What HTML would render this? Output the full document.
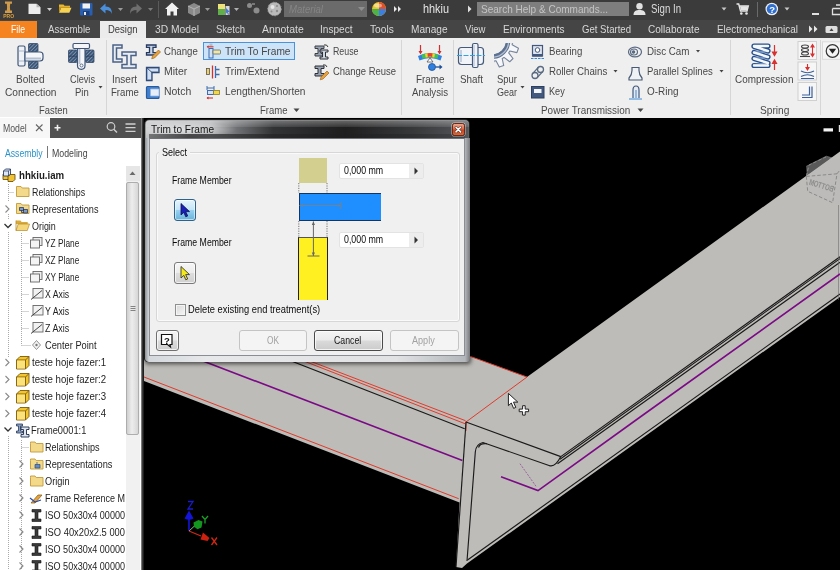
<!DOCTYPE html>
<html>
<head>
<meta charset="utf-8">
<title>Inventor</title>
<style>
*{box-sizing:border-box;margin:0;padding:0}
html,body{width:840px;height:570px;overflow:hidden;background:#000}
body{filter:blur(0.4px);font-family:"Liberation Sans",sans-serif;font-size:12px;color:#3a3a3a;position:relative}
.abs{position:absolute}
.t{position:absolute;white-space:nowrap;line-height:1}
#titlebar{left:0;top:0;width:840px;height:20px;background:#3b3b3b}
#tabbar{left:0;top:20px;width:840px;height:18px;background:#474747}
#ribbon{left:0;top:38px;width:840px;height:79px;background:#eeeeee}
.tab{position:absolute;top:24px;font-size:11.5px;color:#d6d6d6;white-space:nowrap;line-height:1}
.rt{position:absolute;font-size:11.5px;color:#3c3c3c;white-space:nowrap;line-height:1}
.pl{position:absolute;font-size:11px;color:#444;white-space:nowrap;line-height:1;top:105px}
.sep{position:absolute;top:40px;width:1px;height:74px;background:#d4d4d4}
#browser{left:0;top:117px;width:141px;height:453px;background:#fff}
.tr{position:absolute;font-size:10.5px;color:#222;white-space:nowrap;line-height:1}
#viewport{left:141px;top:117px;width:699px;height:453px;background:#000}
#dialog{left:146px;top:120px;width:323px;height:242px}
.dt{position:absolute;font-size:10.5px;color:#1a1a1a;white-space:nowrap;line-height:1}
</style>
</head>
<body>
<!-- VIEWPORT -->
<div id="viewport" class="abs"></div>
<svg class="abs" style="left:0;top:0" width="840" height="570" viewBox="0 0 840 570" id="scene">
<!-- grey beams -->
<polygon points="144,238 527,377 840,151.500 840,297 467,563.5 462,568 456,567 459.5,502.5 144,381" fill="#bebcb8"/>
<!-- red lines -->
<g stroke="#e03a2a" stroke-width="1" fill="none">
<line x1="144" y1="377" x2="458.7" y2="498.7"/>
<line x1="144" y1="238" x2="527" y2="377"/>
<line x1="527" y1="377" x2="466" y2="422"/>
<line x1="200" y1="318.9" x2="465.5" y2="420.7"/>
<line x1="200" y1="320.7" x2="465.5" y2="423.9"/>
<line x1="466" y1="421" x2="466" y2="431"/>
</g>
<!-- black edge lines -->
<g stroke="#1a1a1a" stroke-width="1.15" fill="none">
<line x1="200" y1="325.3" x2="464.7" y2="428.8"/>
<line x1="466" y1="422" x2="456" y2="567"/>
<path d="M467,561 L475.3,452 Q476,444 483,442.5 L549,465.5 Q555,468 560.8,456.6"/>
<path d="M478.5,447.5 Q480,443 487,443.8"/>
<line x1="466" y1="422" x2="560.8" y2="456.6"/>
<line x1="560.8" y1="456.6" x2="840" y2="256.8"/>
<line x1="560" y1="459.2" x2="840" y2="258.6"/>
<line x1="557.5" y1="463.8" x2="840" y2="262.2"/>
<line x1="467.5" y1="560" x2="840" y2="294"/>
</g>
<line x1="838.5" y1="205" x2="838.5" y2="300" stroke="#6a6a6a" stroke-width="1" opacity=".55"/>
<!-- purple lines -->
<g stroke="#7b0a86" stroke-width="1.6" fill="none">
<line x1="160" y1="344.4" x2="462.4" y2="460.5"/>
<polyline points="501,476.8 538,490.6 643,415 840,274"/>
</g>
<line x1="520" y1="463.7" x2="536.5" y2="487" stroke="#8a3a90" stroke-width="0.7" stroke-dasharray="2,1.2"/>
</svg>
<!-- TITLE BAR -->
<div class="abs" style="left:0px;top:0px;width:840px;height:20px;background:#3b3b3b;"></div>
<div class="abs" style="left:0px;top:20px;width:840px;height:18px;background:#454545;"></div>
<div class="abs" style="left:0px;top:21px;width:37px;height:17px;background:#f5831f;"></div>
<div class="abs" style="left:100px;top:21px;width:46px;height:17px;background:#ececec;"></div>
<div class="t" style="left:11.00px;top:24.00px;font-size:11px;color:#ffffff;transform:scaleX(0.7898);transform-origin:0 0;">File</div>
<div class="t" style="left:47.50px;top:24.00px;font-size:11px;color:#d8d8d8;transform:scaleX(0.8799);transform-origin:0 0;">Assemble</div>
<div class="t" style="left:108.00px;top:24.00px;font-size:11px;color:#3a3a3a;transform:scaleX(0.8615);transform-origin:0 0;">Design</div>
<div class="t" style="left:155.00px;top:24.00px;font-size:11px;color:#d8d8d8;transform:scaleX(0.9346);transform-origin:0 0;">3D Model</div>
<div class="t" style="left:215.50px;top:24.00px;font-size:11px;color:#d8d8d8;transform:scaleX(0.8623);transform-origin:0 0;">Sketch</div>
<div class="t" style="left:262.00px;top:24.00px;font-size:11px;color:#d8d8d8;transform:scaleX(0.9480);transform-origin:0 0;">Annotate</div>
<div class="t" style="left:320.00px;top:24.00px;font-size:11px;color:#d8d8d8;transform:scaleX(0.9164);transform-origin:0 0;">Inspect</div>
<div class="t" style="left:370.00px;top:24.00px;font-size:11px;color:#d8d8d8;transform:scaleX(0.9248);transform-origin:0 0;">Tools</div>
<div class="t" style="left:411.00px;top:24.00px;font-size:11px;color:#d8d8d8;transform:scaleX(0.9182);transform-origin:0 0;">Manage</div>
<div class="t" style="left:465.00px;top:24.00px;font-size:11px;color:#d8d8d8;transform:scaleX(0.8670);transform-origin:0 0;">View</div>
<div class="t" style="left:503.00px;top:24.00px;font-size:11px;color:#d8d8d8;transform:scaleX(0.9144);transform-origin:0 0;">Environments</div>
<div class="t" style="left:582.00px;top:24.00px;font-size:11px;color:#d8d8d8;transform:scaleX(0.8711);transform-origin:0 0;">Get Started</div>
<div class="t" style="left:648.00px;top:24.00px;font-size:11px;color:#d8d8d8;transform:scaleX(0.9154);transform-origin:0 0;">Collaborate</div>
<div class="t" style="left:717.00px;top:24.00px;font-size:11px;color:#d8d8d8;transform:scaleX(0.9012);transform-origin:0 0;">Electromechanical</div>
<div class="t" style="left:423.00px;top:3.00px;font-size:12px;color:#e4e4e4;transform:scaleX(0.9063);transform-origin:0 0;">hhkiu</div>
<div class="abs" style="left:284px;top:1px;width:83px;height:16px;background:#6b6b6b;"></div>
<div class="t" style="left:289.00px;top:4.00px;font-size:11.5px;color:#858585;font-style:italic;transform:scaleX(0.8312);transform-origin:0 0;">Material</div>
<div class="abs" style="left:476.5px;top:1.5px;width:152.5px;height:14.5px;background:#7e7e7e;"></div>
<div class="t" style="left:481.00px;top:4.00px;font-size:11.5px;color:#c4c4c4;transform:scaleX(0.8715);transform-origin:0 0;">Search Help &amp; Commands...</div>
<div class="t" style="left:651.00px;top:3.00px;font-size:12px;color:#dcdcdc;transform:scaleX(0.8030);transform-origin:0 0;">Sign In</div>
<svg class="abs" style="left:0;top:0" width="840" height="38" viewBox="0 0 840 38">
<!-- logo -->
<path d="M5,1.500 h7 v2.300 h-1.800 q-.6,3.300 0,6.800 h1.800 v2.400 h-7 v-2.400 h1.800 q.6,-3.500 0,-6.800 h-1.800 z" fill="#d09a4c"/>
<text x="3.200" y="18.300" font-family="Liberation Sans" font-size="5" font-weight="bold" fill="#d9a040">PRO</text>
<!-- new -->
<path d="M28.500,3.800 h8 l4,3.500 v6.700 h-12 z" fill="#ececec"/><path d="M36.500,3.800 l4,3.500 h-4 z" fill="#b5b5b5"/>
<path d="M47,8 h5 l-2.5,3 z" fill="#cfcfcf"/>
<!-- open -->
<path d="M59,4.500 h4.500 l1,1.300 h5.500 v2 h-11 z" fill="#e8b830"/><path d="M59,12.800 l2.200,-5 h10.300 l-2.200,5 z" fill="#f7d354"/><path d="M59,5.500 v7.300 l2.200,-5 h8.800 v-1 h-11z" fill="#c9961a"/>
<!-- save -->
<rect x="80" y="3" width="12.5" height="12.5" rx="1" fill="#2a5fb0"/><rect x="82.5" y="3.5" width="7.5" height="5" fill="#f2f2f2"/><rect x="83" y="11" width="6.5" height="4.5" fill="#1b3f7a"/><rect x="84" y="12" width="2" height="3" fill="#e8e8e8"/>
<!-- undo -->
<path d="M100,8.5 l5.5,-5 v3 c5,0 6.5,3 6.5,7.5 c-1,-3 -3,-4 -6.5,-4 v3.5 z" fill="#4a8fdc"/>
<path d="M118,8 h5 l-2.5,3 z" fill="#9a9a9a"/>
<!-- redo -->
<path d="M142,8.5 l-5.5,-5 v3 c-5,0 -6.5,3 -6.5,7.5 c1,-3 3,-4 6.5,-4 v3.5 z" fill="#6e6e6e"/>
<path d="M148,8 h5 l-2.5,3 z" fill="#7d7d7d"/>
<rect x="158" y="1" width="1" height="17" fill="#5a5a5a"/>
<!-- home -->
<path d="M172,2.5 l7,6.5 h-2 v6.5 h-3.5 v-4 h-3 v4 h-3.5 v-6.5 h-2 z" fill="#f0f0f0"/>
<!-- grey cube icon -->
<path d="M188,6 l6,-3 l6,3 v7 l-6,3 l-6,-3 z" fill="#8a8a8a"/><path d="M188,6 l6,3 l6,-3 M194,9 v7" stroke="#b5b5b5" stroke-width="1" fill="none"/>
<path d="M205,8 h5 l-2.5,3 z" fill="#9a9a9a"/>
<!-- green/yellow icon -->
<rect x="218" y="4" width="7" height="5" fill="#f0e27a"/><rect x="218" y="9" width="7" height="6" fill="#5fb04a"/><rect x="225.5" y="6" width="4" height="9" fill="#d8d8d8"/><path d="M226,8 l4,4 l-2,0 l1,2.5 l-1,.5 l-1,-2.5 l-1,1 z" fill="#4a7ad0"/>
<path d="M234,8 h5 l-2.5,3 z" fill="#b0b0b0"/>
<!-- grey dots -->
<circle cx="249.500" cy="5.500" r="2.500" fill="#8c8c8c"/><circle cx="256.500" cy="10.500" r="3" fill="#8c8c8c"/><rect x="252" y="3" width="3" height="2" fill="#777"/>
<!-- sphere -->
<circle cx="274.500" cy="9" r="6.800" fill="#b9b9b9"/><circle cx="274.500" cy="9" r="6.800" fill="none" stroke="#9a9a9a" stroke-width="1" stroke-dasharray="1.5,1.5"/><circle cx="272.500" cy="7" r="2" fill="#e6e6e6"/><circle cx="277" cy="11" r="1.200" fill="#8a8a8a"/><circle cx="271.500" cy="11.500" r="1" fill="#8a8a8a"/><circle cx="277" cy="6" r="1" fill="#8a8a8a"/>
<path d="M358,7 h7 l-3.500,4 z" fill="#8f8f8f"/>
<!-- colour wheel -->
<circle cx="379" cy="9" r="7" fill="#e8c62a"/><path d="M379,9 L379,2 A7,7 0 0 1 386,9 z" fill="#e2502a"/><path d="M379,9 L386,9 A7,7 0 0 1 379,16 z" fill="#3c7fe0"/><path d="M379,9 L379,16 A7,7 0 0 1 372,9 z" fill="#4db04a"/><ellipse cx="378" cy="5.500" rx="4" ry="2" fill="#fff" opacity=".45"/>
<path d="M394,6 l3,3 l-3,3 z M398,6 l3,3 l-3,3 z" fill="#e8e8e8"/>
<path d="M468,5.500 l3.500,3.500 l-3.500,3.500 z" fill="#e0e0e0"/>
<!-- user -->
<circle cx="639.500" cy="6.300" r="3.200" fill="#e2e2e2"/><path d="M633.500,15 c0,-4 2.500,-5 6,-5 s6,1 6,5 z" fill="#e2e2e2"/>
<path d="M721.500,7.500 h5 l-2.500,3 z" fill="#c8c8c8"/>
<!-- cart -->
<path d="M736.500,4 h2.200 l1.800,7 h6.500 l1.300,-5 h-9" stroke="#e6e6e6" stroke-width="1.400" fill="none"/><circle cx="741.300" cy="13.500" r="1.300" fill="#e6e6e6"/><circle cx="746.500" cy="13.500" r="1.300" fill="#e6e6e6"/><path d="M740,6.200 h8 l-.9,4 h-6.200 z" fill="#e6e6e6"/>
<rect x="757" y="2" width="1" height="15" fill="#6a6a6a"/>
<!-- help -->
<circle cx="771.800" cy="9" r="6.300" fill="#f0f0f0"/><circle cx="771.800" cy="9" r="5.100" fill="#2f6fd0"/>
<text x="769.300" y="12.500" font-family="Liberation Sans" font-size="9.500" font-weight="bold" fill="#fff">?</text>
<path d="M784.500,7.500 h5 l-2.500,3 z" fill="#c8c8c8"/>
<rect x="812" y="13" width="7" height="2" fill="#e0e0e0"/>
<path d="M832.500,8.500 h8 M832.500,8.500 v6 h8 M836,5 h5" stroke="#e0e0e0" stroke-width="1.300" fill="none"/>
<!-- tab row right -->
<path d="M809,25.500 l3.500,3.500 l-3.500,3.500 z M814,25.500 l3.500,3.500 l-3.500,3.500 z" fill="#e8e8e8"/>
<rect x="825.500" y="26" width="12" height="7" rx="1.500" fill="#e0e0e0"/><path d="M829.500,31 l2,-2.800 l2,2.800 z" fill="#444"/>
</svg>
<div class="abs" style="left:0px;top:38px;width:840px;height:79.6px;background:#efefef;"></div>
<div class="abs" style="left:105.5px;top:40px;width:1.0px;height:75px;background:#d6d6d6;"></div>
<div class="abs" style="left:401px;top:40px;width:1px;height:75px;background:#d6d6d6;"></div>
<div class="abs" style="left:453px;top:40px;width:1px;height:75px;background:#d6d6d6;"></div>
<div class="abs" style="left:729.5px;top:40px;width:1.0px;height:75px;background:#d6d6d6;"></div>
<div class="abs" style="left:819.5px;top:40px;width:1.0px;height:75px;background:#d6d6d6;"></div>
<div class="abs" style="left:203.3px;top:41.7px;width:91.69999999999999px;height:18.099999999999994px;background:#cce3f8;border:1px solid #4b92dd;"></div>
<div class="t" style="left:16.00px;top:74.00px;font-size:11.5px;color:#474747;transform:scaleX(0.8740);transform-origin:0 0;">Bolted</div>
<div class="t" style="left:4.50px;top:87.00px;font-size:11.5px;color:#474747;transform:scaleX(0.8852);transform-origin:0 0;">Connection</div>
<div class="t" style="left:69.50px;top:74.00px;font-size:11.5px;color:#474747;transform:scaleX(0.7984);transform-origin:0 0;">Clevis</div>
<div class="t" style="left:75.00px;top:87.00px;font-size:11.5px;color:#474747;transform:scaleX(0.8272);transform-origin:0 0;">Pin</div>
<div class="t" style="left:112.00px;top:74.00px;font-size:11.5px;color:#474747;transform:scaleX(0.8692);transform-origin:0 0;">Insert</div>
<div class="t" style="left:111.00px;top:87.00px;font-size:11.5px;color:#474747;transform:scaleX(0.8352);transform-origin:0 0;">Frame</div>
<div class="t" style="left:416.00px;top:74.00px;font-size:11.5px;color:#474747;transform:scaleX(0.8577);transform-origin:0 0;">Frame</div>
<div class="t" style="left:412.00px;top:87.00px;font-size:11.5px;color:#474747;transform:scaleX(0.8407);transform-origin:0 0;">Analysis</div>
<div class="t" style="left:459.50px;top:74.00px;font-size:11.5px;color:#474747;transform:scaleX(0.8565);transform-origin:0 0;">Shaft</div>
<div class="t" style="left:497.00px;top:74.00px;font-size:11.5px;color:#474747;transform:scaleX(0.8233);transform-origin:0 0;">Spur</div>
<div class="t" style="left:497.00px;top:87.00px;font-size:11.5px;color:#474747;transform:scaleX(0.7823);transform-origin:0 0;">Gear</div>
<div class="t" style="left:734.80px;top:74.00px;font-size:11.5px;color:#474747;transform:scaleX(0.8620);transform-origin:0 0;">Compression</div>
<div class="t" style="left:163.75px;top:46.00px;font-size:11.5px;color:#474747;transform:scaleX(0.8378);transform-origin:0 0;">Change</div>
<div class="t" style="left:163.75px;top:66.00px;font-size:11.5px;color:#474747;transform:scaleX(0.9098);transform-origin:0 0;">Miter</div>
<div class="t" style="left:163.75px;top:86.00px;font-size:11.5px;color:#474747;transform:scaleX(0.9071);transform-origin:0 0;">Notch</div>
<div class="t" style="left:225.00px;top:46.00px;font-size:11.5px;color:#474747;transform:scaleX(0.8837);transform-origin:0 0;">Trim To Frame</div>
<div class="t" style="left:225.00px;top:66.00px;font-size:11.5px;color:#474747;transform:scaleX(0.8853);transform-origin:0 0;">Trim/Extend</div>
<div class="t" style="left:225.00px;top:86.00px;font-size:11.5px;color:#474747;transform:scaleX(0.8803);transform-origin:0 0;">Lengthen/Shorten</div>
<div class="t" style="left:332.50px;top:46.00px;font-size:11.5px;color:#474747;transform:scaleX(0.7671);transform-origin:0 0;">Reuse</div>
<div class="t" style="left:332.50px;top:66.00px;font-size:11.5px;color:#474747;transform:scaleX(0.8211);transform-origin:0 0;">Change Reuse</div>
<div class="t" style="left:548.75px;top:46.00px;font-size:11.5px;color:#474747;transform:scaleX(0.8388);transform-origin:0 0;">Bearing</div>
<div class="t" style="left:548.75px;top:66.00px;font-size:11.5px;color:#474747;transform:scaleX(0.8438);transform-origin:0 0;">Roller Chains</div>
<div class="t" style="left:548.75px;top:86.00px;font-size:11.5px;color:#474747;transform:scaleX(0.7948);transform-origin:0 0;">Key</div>
<div class="t" style="left:647.00px;top:46.00px;font-size:11.5px;color:#474747;transform:scaleX(0.8508);transform-origin:0 0;">Disc Cam</div>
<div class="t" style="left:647.00px;top:66.00px;font-size:11.5px;color:#474747;transform:scaleX(0.8288);transform-origin:0 0;">Parallel Splines</div>
<div class="t" style="left:647.00px;top:86.00px;font-size:11.5px;color:#474747;transform:scaleX(0.8647);transform-origin:0 0;">O-Ring</div>
<div class="t" style="left:38.75px;top:105.00px;font-size:11.5px;color:#4a4a4a;transform:scaleX(0.8177);transform-origin:0 0;">Fasten</div>
<div class="t" style="left:260.00px;top:105.00px;font-size:11.5px;color:#4a4a4a;transform:scaleX(0.8276);transform-origin:0 0;">Frame</div>
<div class="t" style="left:541.25px;top:105.00px;font-size:11.5px;color:#4a4a4a;transform:scaleX(0.8620);transform-origin:0 0;">Power Transmission</div>
<div class="t" style="left:760.00px;top:105.00px;font-size:11.5px;color:#4a4a4a;transform:scaleX(0.8844);transform-origin:0 0;">Spring</div>
<svg class="abs" style="left:0;top:38px" width="840" height="80" viewBox="0 38 840 80">
<!-- dropdown arrows -->
<g fill="#444">
<path d="M98.500,86 h4 l-2,2.500 z"/><path d="M520.500,86 h4 l-2,2.500 z"/>
<path d="M293.500,108.500 h6 l-3,3.500 z"/><path d="M637.500,108.500 h6 l-3,3.500 z"/>
<path d="M613.500,70 h4 l-2,2.500 z"/><path d="M696,50 h4 l-2,2.500 z"/><path d="M719.500,70 h4 l-2,2.500 z"/>
</g>
<!-- Bolted connection -->
<defs><pattern id="hat" width="2.500" height="2.500" patternUnits="userSpaceOnUse" patternTransform="rotate(-45)"><rect width="2.500" height="2.500" fill="#3d5676"/><rect width="2.500" height=".8" fill="#7f96b4"/></pattern></defs>
<g>
<rect x="28.500" y="43.500" width="9.500" height="8.500" rx="1" fill="url(#hat)" stroke="#33496a" stroke-width=".8"/><rect x="28.500" y="61" width="9.500" height="7.500" rx="1" fill="url(#hat)" stroke="#33496a" stroke-width=".8"/>
<rect x="18" y="46" width="7" height="20" rx="1.500" fill="#eef1f5" stroke="#3f5678" stroke-width="1.200"/>
<path d="M18.500,51 h6 M18.500,61 h6" stroke="#9aa9bf" stroke-width=".8"/>
<path d="M25,52 h15 q3,0 3,3 v3 q0,3 -3,3 h-15 z" fill="#f4f6f9" stroke="#3f5678" stroke-width="1.200"/>
<path d="M26,58.500 h15" stroke="#b4c0d2" stroke-width="2"/>
</g>
<!-- Clevis pin -->
<g>
<rect x="68.500" y="50" width="8.500" height="12.500" rx="1" fill="url(#hat)" stroke="#33496a" stroke-width=".8"/><rect x="85.500" y="50" width="8.500" height="12.500" rx="1" fill="url(#hat)" stroke="#33496a" stroke-width=".8"/>
<path d="M68.500,56.200 h8.500 M85.500,56.200 h8.500" stroke="#2a3d5a" stroke-width=".8"/>
<rect x="73" y="43.500" width="16.500" height="5" rx="1.200" fill="#f4f6f9" stroke="#3f5678" stroke-width="1.200"/>
<path d="M77.500,48.500 v17 q0,3.800 3.800,3.800 q3.700,0 3.700,-3.800 v-17 z" fill="#f4f6f9" stroke="#3f5678" stroke-width="1.200"/>
<path d="M79.500,49 v15" stroke="#b4c0d2" stroke-width="1.800"/>
<circle cx="81.500" cy="65.500" r="1.500" fill="#fff" stroke="#3f5678" stroke-width=".8"/>
</g>
<!-- Insert frame -->
<g fill="#e9edf2" stroke="#4a6288" stroke-width="1.500">
<path d="M113,45 h9 v3 h-5.500 v11 h5.500 v3 h-9 z"/>
<path d="M122,52 h14 v3.500 h-5 v9 h5 v3.500 h-14 v-3.500 h5 v-9 h-5 z"/>
</g>
<!-- Change icon -->
<g><path d="M146.500,45 h9.500 v2.300 h-3 v5.400 h3 v2.300 h-9.500 v-2.300 h3 v-5.400 h-3 z" fill="#c9d4e4" stroke="#243a62" stroke-width="1.300"/>
<path d="M152.500,56 l6,-6 l2,2 l-6,6 l-2.800,.8 z" fill="#e9a23b" stroke="#8a5a1a" stroke-width=".6"/></g>
<!-- Miter -->
<path d="M146.500,67.500 h12.500 v5 h-7 v8 h-5.500 z" fill="#a9c1e0" stroke="#2f4a78" stroke-width="1.300"/><path d="M148,69 h10 v2 h-7 v8 h-3z" fill="#e4ecf6" opacity=".7"/><path d="M146.500,67.500 l5.500,5" stroke="#42587e" stroke-width="1"/>
<!-- Notch -->
<rect x="146.500" y="86.500" width="12.500" height="12" rx="1" fill="#3e7fd0" stroke="#2a5a9a" stroke-width="1.200"/><path d="M159,89 h-8.500 v7 h8.500 z" fill="#e6eef8" stroke="#9ab8e0" stroke-width=".8"/>
<!-- Trim to frame icon -->
<g><rect x="209" y="48.500" width="4" height="9.500" fill="#cfe0f4" stroke="#3d6cb0" stroke-width="1"/><rect x="213" y="50" width="7.500" height="4" rx=".8" fill="#ece6b0" stroke="#6a6a5a" stroke-width=".8"/><rect x="209.500" y="43.500" width="3" height="2.500" fill="#b8bcc4"/><path d="M207.500,46.800 h6" stroke="#d03030" stroke-width="1.100"/><path d="M208.500,45.300 l-1.800,1.500 l1.800,1.500z" fill="#d03030"/></g>
<!-- Trim/Extend icon -->
<g><rect x="206.500" y="68.500" width="3" height="6" fill="#f0d060" stroke="#555" stroke-width=".8"/><path d="M212.500,65.500 v13" stroke="#d03030" stroke-width="1.300"/><path d="M215.500,66 v12 M215.500,69.500 h4 M215.500,74.500 h4" stroke="#3d6cb0" stroke-width="1.300" fill="none"/></g>
<!-- Lengthen/Shorten icon -->
<g><path d="M207,86 v4 M207,88 h7 M214,86 v4" stroke="#3d6cb0" stroke-width="1" fill="none"/><rect x="207.500" y="90.500" width="6" height="4" fill="#d6e2f2" stroke="#3d6cb0" stroke-width="1"/><rect x="213.500" y="90.500" width="6" height="4" fill="#f0d848" stroke="#8a7a30" stroke-width=".8"/><path d="M207,98 h6" stroke="#d03030" stroke-width="1.100"/><path d="M208.500,96.500 l-2,1.500 l2,1.500z" fill="#d03030"/></g>
<!-- Reuse -->
<g><path d="M315,46 h9 v2.500 h-3 v5 h3 v2.500 h-9 v-2.500 h3 v-5 h-3 z" fill="#9aa3b0" stroke="#3a3f48" stroke-width="1"/><path d="M320,50 h8 v2 h-2.500 v5 h2.500 v2 h-8 v-2 h2.500 v-5 h-2.500 z" fill="#d0d6de" stroke="#2a2f38" stroke-width="1"/><path d="M324,45 q3,-1 4,2" stroke="#333" stroke-width="1" fill="none"/></g>
<!-- Change reuse -->
<g><path d="M315,66 h9 v2.500 h-3 v5 h3 v2.500 h-9 v-2.500 h3 v-5 h-3 z" fill="#9aa3b0" stroke="#2a2f38" stroke-width="1"/><path d="M321,77 l6,-6 l2,2 l-6,6 l-2.800,.8 z" fill="#e9a23b" stroke="#8a5a1a" stroke-width=".6"/><path d="M323,65 q3,-1 4,2" stroke="#333" stroke-width="1" fill="none"/></g>
<!-- Frame analysis -->
<g>
<path d="M418,56 q12,-6 24,0 l-1.500,4.500 q-10.500,-5 -21,0 z" fill="#2f7fe0"/>
<path d="M421.500,54.800 q8.500,-3.500 17,0 l-1,4 q-7.500,-3 -15,0 z" fill="#3fc05a"/>
<path d="M425,53.800 q5,-1.800 10,0 l-.7,3.800 q-4.300,-1.400 -8.600,0 z" fill="#f1d52a"/>
<path d="M427.500,53.300 q2.500,-.8 5,0 l-.3,3.600 q-2.200,-.6 -4.400,0 z" fill="#e8402a"/>
<path d="M420.500,45 v8 M439.500,45 v8" stroke="#d03030" stroke-width="1.200"/><path d="M418.500,51 h4 l-2,3.500z M437.500,51 h4 l-2,3.500z" fill="#d03030"/>
<path d="M430,58 l-3,4 h6 z" fill="#fff" stroke="#555" stroke-width=".8"/>
<circle cx="432" cy="67" r="3.500" fill="#2f7fe0" stroke="#1b4f9a" stroke-width=".8"/><path d="M435.500,67 h5" stroke="#1b4f9a" stroke-width="1.300"/><path d="M439.500,64.500 l3,2.500 l-3,2.500z" fill="#1b4f9a"/>
</g>
<!-- Shaft -->
<g fill="#f1f4f8" stroke="#45597a" stroke-width="1.200">
<rect x="458.500" y="47.500" width="25" height="17" rx="3"/><rect x="472.500" y="43.500" width="5.500" height="24" rx="1.500"/>
<path d="M461,50 v12" stroke="#c4cedc" stroke-width="2" fill="none"/><path d="M474,45 v21" stroke="#c4cedc" stroke-width="1.500" fill="none"/>
<path d="M457,55.500 h28" stroke="#35a0dc" stroke-width="1.100" stroke-dasharray="5,1.500" fill="none"/>
</g>
<!-- Spur gear -->
<clipPath id="gclip"><rect x="494" y="43" width="28" height="27"/></clipPath>
<g clip-path="url(#gclip)">
<path d="M511.6,35.2 L511.9,36.2 L519.1,36.5 L519.5,41.2 L512.4,42.7 L512.3,43.8 L512.1,44.8 L518.5,48.2 L516.9,52.6 L509.8,51.0 L509.3,51.9 L508.7,52.8 L513.0,58.5 L509.7,61.8 L504.0,57.4 L503.1,58.0 L502.2,58.5 L503.7,65.6 L499.3,67.1 L496.0,60.7 L494.9,60.9 L493.9,61.0 L492.3,68.0 L487.6,67.5 L487.3,60.3 L486.3,60.0 L488.2,54.3 A14,14 0 0 0 505.9,36.9 Z" fill="#f5f7fa" stroke="#77859b" stroke-width="1.100" stroke-linejoin="round"/>
<path d="M487.7,55.7 A15.5,15.5 0 0 0 507.3,36.5" stroke="#5d7192" stroke-width="4.500" fill="none"/>
<path d="M487.7,55.7 A15.5,15.5 0 0 0 507.3,36.5" stroke="#b4bfd0" stroke-width="1.300" fill="none" transform="translate(.5,.5)"/>
</g>
<!-- Bearing -->
<g><rect x="532.500" y="45.500" width="10" height="10.500" fill="#dfe5ee" stroke="#42587e" stroke-width="1.200"/><circle cx="537.500" cy="50" r="2.300" fill="#fff" stroke="#42587e" stroke-width="1"/><rect x="532.500" y="54" width="10" height="2.500" fill="#42587e"/><path d="M531,58.500 h13" stroke="#3a88d8" stroke-width="1" stroke-dasharray="2.500,1"/></g>
<!-- Roller chains -->
<g fill="none" stroke="#5a6a82" stroke-width="1.300"><circle cx="535" cy="75.500" r="3"/><circle cx="540.500" cy="69.500" r="3"/><path d="M532.800,73.400 l5.500,-6 M537.200,77.600 l5.500,-6"/></g>
<!-- Key -->
<g><rect x="531.500" y="86.500" width="12.500" height="11.500" fill="#42587e" stroke="#2d3f5f" stroke-width="1"/><rect x="534" y="89" width="7.500" height="4" fill="#f2f4f7"/></g>
<!-- Disc Cam -->
<g fill="none" stroke="#5a6a82" stroke-width="1.200"><ellipse cx="635" cy="52" rx="6.500" ry="4.800"/><ellipse cx="634" cy="52" rx="3.500" ry="3"/><circle cx="633.500" cy="52" r="1.200" fill="#5a6a82"/></g>
<!-- Parallel splines -->
<path d="M632,67.500 h7 v3 q0,4 3,7.500 v2 h-13 v-2 q3,-3.500 3,-7.500 z" fill="#eef1f5" stroke="#4a5a74" stroke-width="1.200"/>
<!-- O-Ring -->
<g><path d="M633,98 v-8 q0,-4 3,-4 q3,0 3,4 v8" fill="#e6eaf0" stroke="#42587e" stroke-width="1.200"/><path d="M636,90 v8" stroke="#3a88d8" stroke-width="1"/><path d="M629,99 h13" stroke="#3a88d8" stroke-width="1"/></g>
<!-- Compression spring -->
<g fill="none" stroke-linecap="round">
<g stroke="#27508c" stroke-width="5.200">
<path d="M754,46 h14 M754,46.500 l14,4.500 M754,52.500 l14,4.500 M754,58.500 l14,4.500 M754,65.500 h14"/>
</g>
<g stroke="#6f8fbf" stroke-width="2.200"><path d="M768,51 l-14,1.500 M768,57 l-14,1.500 M768,63 l-14,2"/></g>
<g stroke="#f4f7fb" stroke-width="2.400">
<path d="M754,46 h14 M754,46.500 l14,4.500 M754,52.500 l14,4.500 M754,58.500 l14,4.500 M754,65.500 h14"/>
</g>
</g>
<g stroke="#d83030" stroke-width="1.200" fill="#d83030"><path d="M774.500,45 v9"/><path d="M772.500,52 h4 l-2,3.500z"/><path d="M774.500,61 v9"/><path d="M772.500,63.500 h4 l-2,-3.500z"/></g>
<!-- three small buttons -->
<g>
<rect x="798" y="41.500" width="18.500" height="18" fill="#f6f6f6" stroke="#d0d0d0" stroke-width="1"/>
<rect x="798" y="62" width="18.500" height="18" fill="#f6f6f6" stroke="#d0d0d0" stroke-width="1"/>
<rect x="798" y="82.500" width="18.500" height="18" fill="#f6f6f6" stroke="#d0d0d0" stroke-width="1"/>
<g fill="none" stroke="#444" stroke-width="1.100"><ellipse cx="805" cy="46.500" rx="3.500" ry="1.500"/><ellipse cx="805" cy="50" rx="3.500" ry="1.500"/><ellipse cx="805" cy="53.500" rx="3.500" ry="1.500"/><path d="M800,56.500 h10"/></g>
<g stroke="#d83030" stroke-width="1.100" fill="#d83030"><path d="M812.500,46 v9"/><path d="M811,47 h3 l-1.500,-2.500z"/><path d="M811,54 h3 l-1.500,2.500z"/></g>
<g fill="none" stroke="#3a5f9a" stroke-width="1.200"><path d="M801,71 q6.500,3.500 13,0 M801,76.500 q6.500,-3.500 13,0 M801,78.500 h13"/></g>
<g stroke="#d83030" stroke-width="1.100" fill="#d83030"><path d="M807.500,64 v4.500"/><path d="M806,67.500 h3 l-1.500,2.500z"/></g>
<path d="M802,97.500 h10 v-11 M802,95 h7.500 v-8.500" fill="none" stroke="#3a5f9a" stroke-width="1.200"/>
</g>
<!-- round dropdown -->
<rect x="822.500" y="41.800" width="20" height="17.500" fill="#f5f5f5" stroke="#dadada" stroke-width="1"/>
<circle cx="832.500" cy="51" r="6.300" fill="#f4f4f4" stroke="#333" stroke-width="1.200"/><path d="M828.800,48.800 h7.400 l-3.700,5 z" fill="#222"/>
</svg>

<!-- BROWSER -->
<div class="abs" style="left:0px;top:117px;width:141px;height:453px;background:#ffffff;"></div>
<div class="abs" style="left:140.500px;top:118px;width:3.500px;height:452px;background:linear-gradient(90deg,#9a9a9a,#3a3a3a 50%,#111 100%);"></div>
<div class="abs" style="left:0px;top:118px;width:141px;height:20px;background:#505050;"></div>
<div class="abs" style="left:0px;top:118px;width:49.5px;height:20px;background:#f7f7f7;"></div>
<div class="t" style="left:2.80px;top:123.00px;font-size:11px;color:#555;transform:scaleX(0.7910);transform-origin:0 0;">Model</div>
<div class="t" style="left:4.80px;top:148.00px;font-size:10.5px;color:#2b93c9;transform:scaleX(0.8261);transform-origin:0 0;">Assembly</div>
<div class="abs" style="left:47px;top:146px;width:1px;height:12px;background:#777;"></div>
<div class="t" style="left:52.40px;top:148.00px;font-size:10.5px;color:#444;transform:scaleX(0.8354);transform-origin:0 0;">Modeling</div>
<div class="t" style="left:19.00px;top:170.00px;font-size:10.5px;color:#1e1e1e;font-weight:bold;transform:scaleX(0.9223);transform-origin:0 0;">hhkiu.iam</div>
<div class="t" style="left:31.50px;top:187.00px;font-size:10.5px;color:#1e1e1e;transform:scaleX(0.8439);transform-origin:0 0;">Relationships</div>
<div class="t" style="left:31.50px;top:204.00px;font-size:10.5px;color:#1e1e1e;transform:scaleX(0.8697);transform-origin:0 0;">Representations</div>
<div class="t" style="left:31.50px;top:221.00px;font-size:10.5px;color:#1e1e1e;transform:scaleX(0.8497);transform-origin:0 0;">Origin</div>
<div class="t" style="left:45.20px;top:238.00px;font-size:10.5px;color:#1e1e1e;transform:scaleX(0.7941);transform-origin:0 0;">YZ Plane</div>
<div class="t" style="left:45.20px;top:255.00px;font-size:10.5px;color:#1e1e1e;transform:scaleX(0.7941);transform-origin:0 0;">XZ Plane</div>
<div class="t" style="left:45.20px;top:272.00px;font-size:10.5px;color:#1e1e1e;transform:scaleX(0.7869);transform-origin:0 0;">XY Plane</div>
<div class="t" style="left:45.20px;top:289.00px;font-size:10.5px;color:#1e1e1e;transform:scaleX(0.8294);transform-origin:0 0;">X Axis</div>
<div class="t" style="left:45.20px;top:306.00px;font-size:10.5px;color:#1e1e1e;transform:scaleX(0.8348);transform-origin:0 0;">Y Axis</div>
<div class="t" style="left:45.20px;top:323.00px;font-size:10.5px;color:#1e1e1e;transform:scaleX(0.8465);transform-origin:0 0;">Z Axis</div>
<div class="t" style="left:44.50px;top:340.00px;font-size:10.5px;color:#1e1e1e;transform:scaleX(0.8823);transform-origin:0 0;">Center Point</div>
<div class="t" style="left:32.00px;top:357.00px;font-size:10.5px;color:#1e1e1e;transform:scaleX(0.9187);transform-origin:0 0;">teste hoje fazer:1</div>
<div class="t" style="left:32.00px;top:374.00px;font-size:10.5px;color:#1e1e1e;transform:scaleX(0.9187);transform-origin:0 0;">teste hoje fazer:2</div>
<div class="t" style="left:32.00px;top:391.00px;font-size:10.5px;color:#1e1e1e;transform:scaleX(0.9187);transform-origin:0 0;">teste hoje fazer:3</div>
<div class="t" style="left:32.00px;top:408.00px;font-size:10.5px;color:#1e1e1e;transform:scaleX(0.9187);transform-origin:0 0;">teste hoje fazer:4</div>
<div class="t" style="left:31.30px;top:425.00px;font-size:10.5px;color:#1e1e1e;transform:scaleX(0.8855);transform-origin:0 0;">Frame0001:1</div>
<div class="t" style="left:44.50px;top:442.00px;font-size:10.5px;color:#1e1e1e;transform:scaleX(0.8646);transform-origin:0 0;">Relationships</div>
<div class="t" style="left:44.50px;top:459.00px;font-size:10.5px;color:#1e1e1e;transform:scaleX(0.8828);transform-origin:0 0;">Representations</div>
<div class="t" style="left:44.50px;top:476.00px;font-size:10.5px;color:#1e1e1e;transform:scaleX(0.8747);transform-origin:0 0;">Origin</div>
<div class="t" style="left:44.50px;top:493.00px;font-size:10.5px;color:#1e1e1e;transform:scaleX(0.8569);transform-origin:0 0;">Frame Reference M</div>
<div class="t" style="left:44.50px;top:510.00px;font-size:10.5px;color:#1e1e1e;transform:scaleX(0.8619);transform-origin:0 0;">ISO 50x30x4 00000</div>
<div class="t" style="left:44.50px;top:527.00px;font-size:10.5px;color:#1e1e1e;transform:scaleX(0.8899);transform-origin:0 0;">ISO 40x20x2.5 000</div>
<div class="t" style="left:44.50px;top:544.00px;font-size:10.5px;color:#1e1e1e;transform:scaleX(0.8619);transform-origin:0 0;">ISO 50x30x4 00000</div>
<div class="t" style="left:44.50px;top:561.00px;font-size:10.5px;color:#1e1e1e;transform:scaleX(0.8619);transform-origin:0 0;">ISO 50x30x4 00000</div>
<div class="abs" style="left:126px;top:166px;width:13.5px;height:404px;background:#f1f1f1;"></div>
<div class="abs" style="left:126px;top:166px;width:13.5px;height:15px;background:#e6e6e6;"></div>
<div class="abs" style="left:126.300px;top:182px;width:12.700px;height:252.500px;border:1px solid #adadad;border-radius:2px;background:linear-gradient(90deg,#cfcfcf,#ededed 45%,#d6d6d6 100%);"></div>
<svg class="abs" style="left:0;top:117px" width="141" height="453" viewBox="0 117 141 453"><path d="M36,124.500 l6.500,6.500 M42.500,124.500 l-6.500,6.500" stroke="#666" stroke-width="1.100"/><path d="M54.500,127.700 h6 M57.500,124.700 v6" stroke="#f0f0f0" stroke-width="1.600"/><circle cx="111" cy="126.500" r="3.800" fill="none" stroke="#cfcfcf" stroke-width="1.200"/><path d="M113.800,129.300 l3.200,3.200" stroke="#cfcfcf" stroke-width="1.400"/><path d="M125.500,124 h10 M125.500,127.700 h10 M125.500,131.400 h10" stroke="#cfcfcf" stroke-width="1.300"/><path d="M129.500,175 l3,-3.500 l3,3.500 z" fill="#6a6a6a"/><path d="M130.500,306.500 h5 M130.500,308.500 h5 M130.500,310.500 h5" stroke="#777" stroke-width=".9"/><path d="M3,174.500 l2,-2 h5 v5 l-2,2 h-5z" fill="#f1c232" stroke="#5a4108" stroke-width=".8"/><path d="M8,176.500 l2,-2 h5 v5 l-2,2 h-5z" fill="#f1c232" stroke="#5a4108" stroke-width=".8"/><path d="M3.500,171 l2,-2 h5 v5 l-2,2 h-5z" fill="#dce8f8" stroke="#1c2f57" stroke-width=".8"/><path d="M3.500,171 h5 v5 M8.500,171 l2,-2" fill="none" stroke="#1c2f57" stroke-width=".7"/><path d="M16.5,188.0 v-1.500 h4.500 l1.200,1.500 h6.800 v8.500 h-12.500 z" fill="#f3d98a" stroke="#c29a3a" stroke-width=".9"/><path d="M5.5,205.5 l3.500,3.500 l-3.500,3.500" fill="none" stroke="#8a8a8a" stroke-width="1.100"/><path d="M16.5,205.0 v-1.500 h4.500 l1.200,1.500 h6.800 v8.500 h-12.500 z" fill="#f3d98a" stroke="#c29a3a" stroke-width=".9"/><path d="M19.500,207.500 h4 v3 h-4z M23.500,209.500 h4 v3.500 h-4z M21.500,210.500 v2 h2" fill="#7a9ad0" stroke="#1a2a50" stroke-width=".7"/><path d="M4.5,224 l3.500,3.500 l3.500,-3.500" fill="none" stroke="#333" stroke-width="1.300"/><path d="M16,220.5 h4.500 l1.200,1.500 h6 v2 h-11.700z" fill="#d9a93a"/><path d="M16,230.5 l2.200,-6.500 h11.300 l-2.200,6.500 z" fill="#f4d77a" stroke="#b58a2a" stroke-width=".7"/><path d="M16,220.5 v10" stroke="#b58a2a" stroke-width=".8"/><path d="M21.500,233 v112.500 M21.500,243.500 h8 M21.500,260.500 h8 M21.500,277.500 h8 M21.500,294.500 h8 M21.500,311.500 h8 M21.500,328.500 h8 M21.500,345.500 h9 M8.500,184 v18 M8.500,192.500 h6 M8.500,214 v6 M8.500,232 v126 M8.500,436 v134" fill="none" stroke="#aaa" stroke-width="1" stroke-dasharray="1,1"/><g fill="none" stroke="#666" stroke-width=".9"><rect x="33" y="237.5" width="9" height="8" fill="#eee"/><rect x="30.5" y="240" width="9" height="8" fill="#f4f4f4"/></g><g fill="none" stroke="#666" stroke-width=".9"><rect x="33" y="254.5" width="9" height="8" fill="#eee"/><rect x="30.5" y="257" width="9" height="8" fill="#f4f4f4"/></g><g fill="none" stroke="#666" stroke-width=".9"><rect x="33" y="271.5" width="9" height="8" fill="#eee"/><rect x="30.5" y="274" width="9" height="8" fill="#f4f4f4"/></g><g fill="none" stroke="#666" stroke-width=".9"><rect x="33" y="288.5" width="10" height="9.500" fill="#f2f2f2"/><path d="M31,299.5 l11,-9" stroke="#444" stroke-width="1"/></g><g fill="none" stroke="#666" stroke-width=".9"><rect x="33" y="305.5" width="10" height="9.500" fill="#f2f2f2"/><path d="M31,316.5 l11,-9" stroke="#444" stroke-width="1"/></g><g fill="none" stroke="#666" stroke-width=".9"><rect x="33" y="322.5" width="10" height="9.500" fill="#f2f2f2"/><path d="M31,333.5 l11,-9" stroke="#444" stroke-width="1"/></g><path d="M36.500,340.500 l4,4.500 l-4,4.500 l-4,-4.500z" fill="#f4f4f4" stroke="#888" stroke-width=".9"/><circle cx="36.500" cy="345" r="1.200" fill="#777"/><path d="M5.5,359 l3.500,3.500 l-3.500,3.500" fill="none" stroke="#8a8a8a" stroke-width="1.100"/><path d="M16.5,360 l3.500,-3.500 h9 v9 l-3.500,3.500 h-9 z" fill="#f2c52a" stroke="#7a5a10" stroke-width=".9"/><path d="M16.5,360 h9 v9 M25.5,360 l3.500,-3.500" fill="none" stroke="#7a5a10" stroke-width=".9"/><rect x="17" y="360.5" width="8" height="8" fill="#fbe27a"/><path d="M5.5,376 l3.500,3.500 l-3.500,3.500" fill="none" stroke="#8a8a8a" stroke-width="1.100"/><path d="M16.5,377 l3.500,-3.500 h9 v9 l-3.500,3.500 h-9 z" fill="#f2c52a" stroke="#7a5a10" stroke-width=".9"/><path d="M16.5,377 h9 v9 M25.5,377 l3.500,-3.500" fill="none" stroke="#7a5a10" stroke-width=".9"/><rect x="17" y="377.5" width="8" height="8" fill="#fbe27a"/><path d="M5.5,393 l3.500,3.500 l-3.500,3.500" fill="none" stroke="#8a8a8a" stroke-width="1.100"/><path d="M16.5,394 l3.500,-3.500 h9 v9 l-3.500,3.500 h-9 z" fill="#f2c52a" stroke="#7a5a10" stroke-width=".9"/><path d="M16.5,394 h9 v9 M25.5,394 l3.500,-3.500" fill="none" stroke="#7a5a10" stroke-width=".9"/><rect x="17" y="394.5" width="8" height="8" fill="#fbe27a"/><path d="M5.5,410 l3.500,3.500 l-3.500,3.500" fill="none" stroke="#8a8a8a" stroke-width="1.100"/><path d="M16.5,411 l3.500,-3.500 h9 v9 l-3.500,3.500 h-9 z" fill="#f2c52a" stroke="#7a5a10" stroke-width=".9"/><path d="M16.5,411 h9 v9 M25.5,411 l3.500,-3.500" fill="none" stroke="#7a5a10" stroke-width=".9"/><rect x="17" y="411.5" width="8" height="8" fill="#fbe27a"/><path d="M4.5,427.5 l3.500,3.500 l3.500,-3.500" fill="none" stroke="#333" stroke-width="1.300"/><path d="M16.500,424 h6 v2 h-2 v5 h2 v2 h-6 v-2 h2 v-5 h-2z" fill="#8aa0c0" stroke="#2a3a5a" stroke-width=".8"/><path d="M21,427 h8 v2.500 h-2.500 v5 h2.500 v2.500 h-8 v-2.500 h2.500 v-5 h-2.500z" fill="#dfe5ee" stroke="#1a2a4a" stroke-width=".9"/><path d="M21.500,440 v130 M21.500,447.500 h7" fill="none" stroke="#aaa" stroke-width="1" stroke-dasharray="1,1"/><path d="M30.5,443.5 v-1.500 h4.500 l1.200,1.500 h6.800 v8.500 h-12.500 z" fill="#f3d98a" stroke="#c29a3a" stroke-width=".9"/><path d="M19.5,460.5 l3.500,3.500 l-3.500,3.500" fill="none" stroke="#8a8a8a" stroke-width="1.100"/><path d="M30.5,460.5 v-1.500 h4.500 l1.200,1.500 h6.800 v8.500 h-12.500 z" fill="#f3d98a" stroke="#c29a3a" stroke-width=".9"/><path d="M35,464.500 h5 v3.500 h-5z M37,462 v2.500" fill="#6a8ac0" stroke="#2a4a80" stroke-width=".7"/><path d="M19.5,477.5 l3.500,3.500 l-3.500,3.500" fill="none" stroke="#8a8a8a" stroke-width="1.100"/><path d="M30.5,477.5 v-1.500 h4.500 l1.200,1.500 h6.800 v8.500 h-12.500 z" fill="#f3d98a" stroke="#c29a3a" stroke-width=".9"/><path d="M19.5,494.5 l3.500,3.500 l-3.500,3.500" fill="none" stroke="#8a8a8a" stroke-width="1.100"/><path d="M31,503 l7,-8 l4,0 l-7,8z" fill="#e9a23b" stroke="#7a5a10" stroke-width=".7"/><path d="M30,498 l5,4 l6,-2" fill="none" stroke="#2a4aa0" stroke-width="1.200"/><path d="M19.5,511.5 l3.500,3.500 l-3.500,3.500" fill="none" stroke="#8a8a8a" stroke-width="1.100"/><path d="M32,509.5 h9 v2.500 h-3 v7 h3 v2.500 h-9 v-2.500 h3 v-7 h-3 z" fill="#3a3a3a" stroke="#111" stroke-width=".6"/><path d="M19.5,528.5 l3.500,3.500 l-3.500,3.500" fill="none" stroke="#8a8a8a" stroke-width="1.100"/><path d="M32,526.5 h9 v2.500 h-3 v7 h3 v2.500 h-9 v-2.500 h3 v-7 h-3 z" fill="#3a3a3a" stroke="#111" stroke-width=".6"/><path d="M19.5,545.5 l3.500,3.500 l-3.500,3.500" fill="none" stroke="#8a8a8a" stroke-width="1.100"/><path d="M32,543.5 h9 v2.500 h-3 v7 h3 v2.500 h-9 v-2.500 h3 v-7 h-3 z" fill="#3a3a3a" stroke="#111" stroke-width=".6"/><path d="M19.5,562.5 l3.500,3.500 l-3.500,3.500" fill="none" stroke="#8a8a8a" stroke-width="1.100"/><path d="M32,560.5 h9 v2.500 h-3 v7 h3 v2.500 h-9 v-2.500 h3 v-7 h-3 z" fill="#3a3a3a" stroke="#111" stroke-width=".6"/></svg>
<!-- DIALOG -->
<div class="abs" style="left:144.300px;top:118.700px;width:326.200px;height:243.800px;border-radius:5px 5px 3px 3px;background:linear-gradient(90deg,#c3c5c7 0px,#b2b4b6 66px,#6e7073 92px,#323335 128px,#1e1e1f 200px,#38393b 270px,#55575b 326px);border:1px solid #1e1e1e;box-shadow:0 0 0 0.500px #6a6a6a inset, 1px 2px 4px rgba(0,0,0,.6);"></div>
<div class="abs" style="left:145.500px;top:138px;width:324px;height:223.500px;border-radius:0 0 3px 3px;background:linear-gradient(90deg,#9ea4ab 0,#d4d8dc 3px,#e6e8ea 60px,#e0e2e4 250px,#b4b7bb 319px,#77797d 324px);"></div>
<div class="abs" style="left:145.800px;top:119.700px;width:323.400px;height:7px;border-radius:4px 4px 0 0;background:linear-gradient(180deg,rgba(255,255,255,.34),rgba(255,255,255,.10));"></div>
<div class="abs" style="left:146px;top:122px;width:90px;height:15px;background:radial-gradient(ellipse at 38% 50%,rgba(255,255,255,.55),rgba(255,255,255,0) 72%);"></div>
<div class="abs" style="left:149px;top:133.600px;width:316px;height:4.200px;background:linear-gradient(90deg,rgba(50,50,52,.55) 0,rgba(40,40,42,.8) 40px,rgba(30,30,32,.6) 100px,rgba(30,30,32,.25) 316px);"></div>
<div class="t" style="left:151.00px;top:124.00px;font-size:11.5px;color:#151515;transform:scaleX(0.8778);transform-origin:0 0;">Trim to Frame</div>
<div class="abs" style="left:451.500px;top:123px;width:13.500px;height:13px;border-radius:2.500px;background:linear-gradient(180deg,#eea58a 0%,#dd6b48 45%,#c9431e 55%,#d86a3a 100%);border:1px solid #6a2a18;box-shadow:0 0 0 .6px rgba(255,255,255,.55);"></div>
<div class="abs" style="left:148.5px;top:137.8px;width:316.0px;height:218.2px;background:#f0f0f0;border:1px solid #8a8e94;border-top-color:#6e7277;"></div>
<div class="abs" style="left:156px;top:151.500px;width:303.500px;height:170.500px;border:1px solid #d7d7d7;border-radius:3px;box-shadow:0 0 0 1px #fafafa inset;"></div>
<div class="abs" style="left:159px;top:148px;width:31px;height:10px;background:#f0f0f0;"></div>
<div class="t" style="left:161.90px;top:147.00px;font-size:10.5px;color:#0a0a0a;transform:scaleX(0.8601);transform-origin:0 0;">Select</div>
<div class="t" style="left:172.40px;top:175.00px;font-size:10.5px;color:#0a0a0a;transform:scaleX(0.8305);transform-origin:0 0;">Frame Member</div>
<div class="t" style="left:172.40px;top:237.00px;font-size:10.5px;color:#0a0a0a;transform:scaleX(0.8305);transform-origin:0 0;">Frame Member</div>
<div class="abs" style="left:173.500px;top:198.500px;width:22.500px;height:22.500px;border-radius:3px;border:1px solid #2c628b;background:linear-gradient(180deg,#e5f4fc 0%,#c4e5f6 48%,#98d1ef 52%,#68b3db 100%);box-shadow:0 0 0 1px rgba(255,255,255,.55) inset;"></div>
<div class="abs" style="left:173.500px;top:261.500px;width:22.500px;height:22.500px;border-radius:3px;border:1px solid #7a7a7a;background:linear-gradient(180deg,#f6f6f6 0%,#ececec 48%,#dddddd 52%,#d0d0d0 100%);box-shadow:0 0 0 1px rgba(255,255,255,.7) inset;"></div>
<div class="abs" style="left:174.500px;top:304px;width:11.500px;height:11.500px;border:1px solid #8e8f8f;background:linear-gradient(135deg,#d8d8d8,#f6f6f6);box-shadow:0 0 0 1px #f4f4f4 inset;"></div>
<div class="t" style="left:187.80px;top:304.00px;font-size:10.5px;color:#0a0a0a;transform:scaleX(0.8883);transform-origin:0 0;">Delete existing end treatment(s)</div>
<div class="abs" style="left:298.5px;top:157.5px;width:28.5px;height:25.5px;background:#d3cf8e;"></div>
<div class="abs" style="left:298.5px;top:192.5px;width:82.0px;height:28.0px;background:#1f8fff;border-top:1.500px solid #17365f;border-bottom:1.500px solid #17365f;border-left:1px solid #17365f;"></div>
<div class="abs" style="left:298px;top:236.5px;width:29.5px;height:63.0px;background:#fff022;border-left:1.300px solid #222;border-right:1.300px solid #222;border-top:1px solid #555;"></div>
<div class="abs" style="left:338.500px;top:162.5px;width:85.500px;height:16.500px;background:#ffffff;border:1px solid #e3e3e3;border-radius:2px;"></div>
<div class="abs" style="left:408.500px;top:163.5px;width:14.500px;height:14.500px;background:#ededed;"></div>
<div class="abs" style="left:338.500px;top:231.5px;width:85.500px;height:16.500px;background:#ffffff;border:1px solid #e3e3e3;border-radius:2px;"></div>
<div class="abs" style="left:408.500px;top:232.5px;width:14.500px;height:14.500px;background:#ededed;"></div>
<div class="t" style="left:344.00px;top:165.00px;font-size:10.5px;color:#0a0a0a;transform:scaleX(0.8396);transform-origin:0 0;">0,000 mm</div>
<div class="t" style="left:344.00px;top:234.00px;font-size:10.5px;color:#0a0a0a;transform:scaleX(0.8396);transform-origin:0 0;">0,000 mm</div>
<div class="abs" style="left:156px;top:329.500px;width:22.500px;height:21.500px;border-radius:3px;border:1px solid #707070;background:linear-gradient(180deg,#f4f4f4 0%,#ebebeb 48%,#dcdcdc 52%,#cfcfcf 100%);box-shadow:0 0 0 1px rgba(255,255,255,.7) inset;"></div>
<div class="abs" style="left:238.500px;top:329.500px;width:68.500px;height:21.500px;border-radius:3px;border:1px solid #c4c4c4;background:#f4f4f4;"></div>
<div class="abs" style="left:313.500px;top:329.500px;width:69.500px;height:21.500px;border-radius:3px;border:1px solid #4a4a4a;background:linear-gradient(180deg,#f4f4f4 0%,#ebebeb 48%,#dadada 52%,#cbcbcb 100%);box-shadow:0 0 0 1px rgba(255,255,255,.75) inset;"></div>
<div class="abs" style="left:389.500px;top:329.500px;width:69px;height:21.500px;border-radius:3px;border:1px solid #c4c4c4;background:#f4f4f4;"></div>
<div class="t" style="left:266.70px;top:335.00px;font-size:10.5px;color:#a2a2a2;transform:scaleX(0.7910);transform-origin:0 0;">OK</div>
<div class="t" style="left:334.00px;top:335.00px;font-size:10.5px;color:#151515;transform:scaleX(0.8322);transform-origin:0 0;">Cancel</div>
<div class="t" style="left:411.60px;top:335.00px;font-size:10.5px;color:#a2a2a2;transform:scaleX(0.8642);transform-origin:0 0;">Apply</div>
<svg class="abs" style="left:140px;top:115px" width="340" height="255" viewBox="140 115 340 255"><path d="M456,127.300 l4.600,4.600 M460.600,127.300 l-4.600,4.600" stroke="#4a2a20" stroke-width="2.600" stroke-linecap="round"/><path d="M456,127.300 l4.600,4.600 M460.600,127.300 l-4.600,4.600" stroke="#ffffff" stroke-width="1.500" stroke-linecap="round"/><path d="M298.800,183 v10 M327,183 v10 M298.800,221 v16 M327,221 v16" stroke="#666" stroke-width=".9" stroke-dasharray="1.200,1.200" fill="none"/><path d="M299.500,205.500 h41.500 M341,202 v7" stroke="#6f8296" stroke-width="1" fill="none"/><path d="M341,205.500 l-3.500,-1.500 v3z M299.500,205.500 l3.500,-1.500 v3z" fill="#6f8296"/><path d="M313.400,221.500 v34.500 M307.500,256 h12" stroke="#666" stroke-width="1" fill="none"/><path d="M313.400,221.500 l-1.600,3.500 h3.200z M313.400,256 l-1.600,-3.500 h3.200z" fill="#666"/><path d="M414.500,167.500 l3.500,3.500 l-3.500,3.500z M414.500,236.500 l3.500,3.500 l-3.500,3.500z" fill="#333"/><path d="M181,203.500 v11.500 l2.800,-2.600 l2,4.400 l1.900,-.9 l-2,-4.300 h3.800 z" fill="#1a1fb8" stroke="#0c0c50" stroke-width=".8"/><path d="M181,266.500 v11.500 l2.800,-2.600 l2,4.400 l1.900,-.9 l-2,-4.300 h3.800 z" fill="#f4ea1a" stroke="#333" stroke-width=".9"/><path d="M161.500,334.500 h10.500 v10 h-2 l.5,2.500 l-3,-2.500 h-6 z" fill="#fff" stroke="#111" stroke-width="1.200"/><text x="164" y="343.500" font-family="Liberation Sans" font-size="9.500" font-weight="bold" fill="#111">?</text></svg><svg class="abs" style="left:0;top:0" width="840" height="570" viewBox="0 0 840 570"><g><path d="M189,531 V515" stroke="#1414d8" stroke-width="1.600"/><path d="M189,510.500 l-4.500,8 q4.500,2.500 9,0 z" fill="#1414d8"/><path d="M188,501.500 h5 l-5,7.500 h5" stroke="#1a1ad0" stroke-width="1.300" fill="none"/><path d="M189,531 L195,525.500" stroke="#7ac07a" stroke-width="1"/><path d="M193.500,522.500 l5,-2.500 l4,1.500 l-1,6 l-4,1.800 l-3.500,-2.500 z" fill="#12961e"/><path d="M202,516 l3,3.500 l3,-3.500 M205,519.500 v4" stroke="#1aa028" stroke-width="1.300" fill="none"/><path d="M189,531 L201,536" stroke="#d02814" stroke-width="1.300"/><path d="M203,532.500 l6.500,5.500 l-2,3 l-7,-1.500 z" fill="#cc2010"/><path d="M211.500,537.500 l5.500,7.500 M217,537.500 l-5.500,7.500" stroke="#d02814" stroke-width="1.300" fill="none"/></g><g><path d="M806.300,166 L826.500,155.700 L840,160 L840,204 L832.600,202.700 L807.700,191.300 Z" fill="#b9b9b9" opacity=".55"/><path d="M806.300,165.900 L826.500,155.700 L829.500,159 L808.500,174 Z" fill="#585858" opacity=".95"/><path d="M806.300,176.400 L837,173.800 L832.600,202.700 L807.700,191.300 Z M837,173.800 L840,170 M806.300,176.400 L809,165 L826,157" fill="none" stroke="#8a8a8a" stroke-width="1" stroke-dasharray="3.500,2"/><text transform="translate(832.800,192) scale(-1,1) rotate(-17)" font-family="Liberation Sans" font-size="8.500" font-weight="bold" fill="#8c8c8c" textLength="25.500" lengthAdjust="spacingAndGlyphs">BOTTOM</text></g><rect x="823.500" y="128.300" width="9.500" height="3.200" fill="#f2f2f2"/><rect x="838.800" y="125" width="2" height="7" fill="#e0e0e0"/><path d="M508.400,393.400 v12.300 l2.900,-2.700 l2.300,5.400 l2.200,-1 l-2.300,-5.300 h4.300 z" fill="#fff" stroke="#222" stroke-width="1"/><path d="M522.600,405.700 h2.600 v3.400 h3.400 v2.600 h-3.400 v3.400 h-2.600 v-3.400 h-3.400 v-2.600 h3.400 z" fill="#fff" stroke="#222" stroke-width="1"/></svg>
</body>
</html>
